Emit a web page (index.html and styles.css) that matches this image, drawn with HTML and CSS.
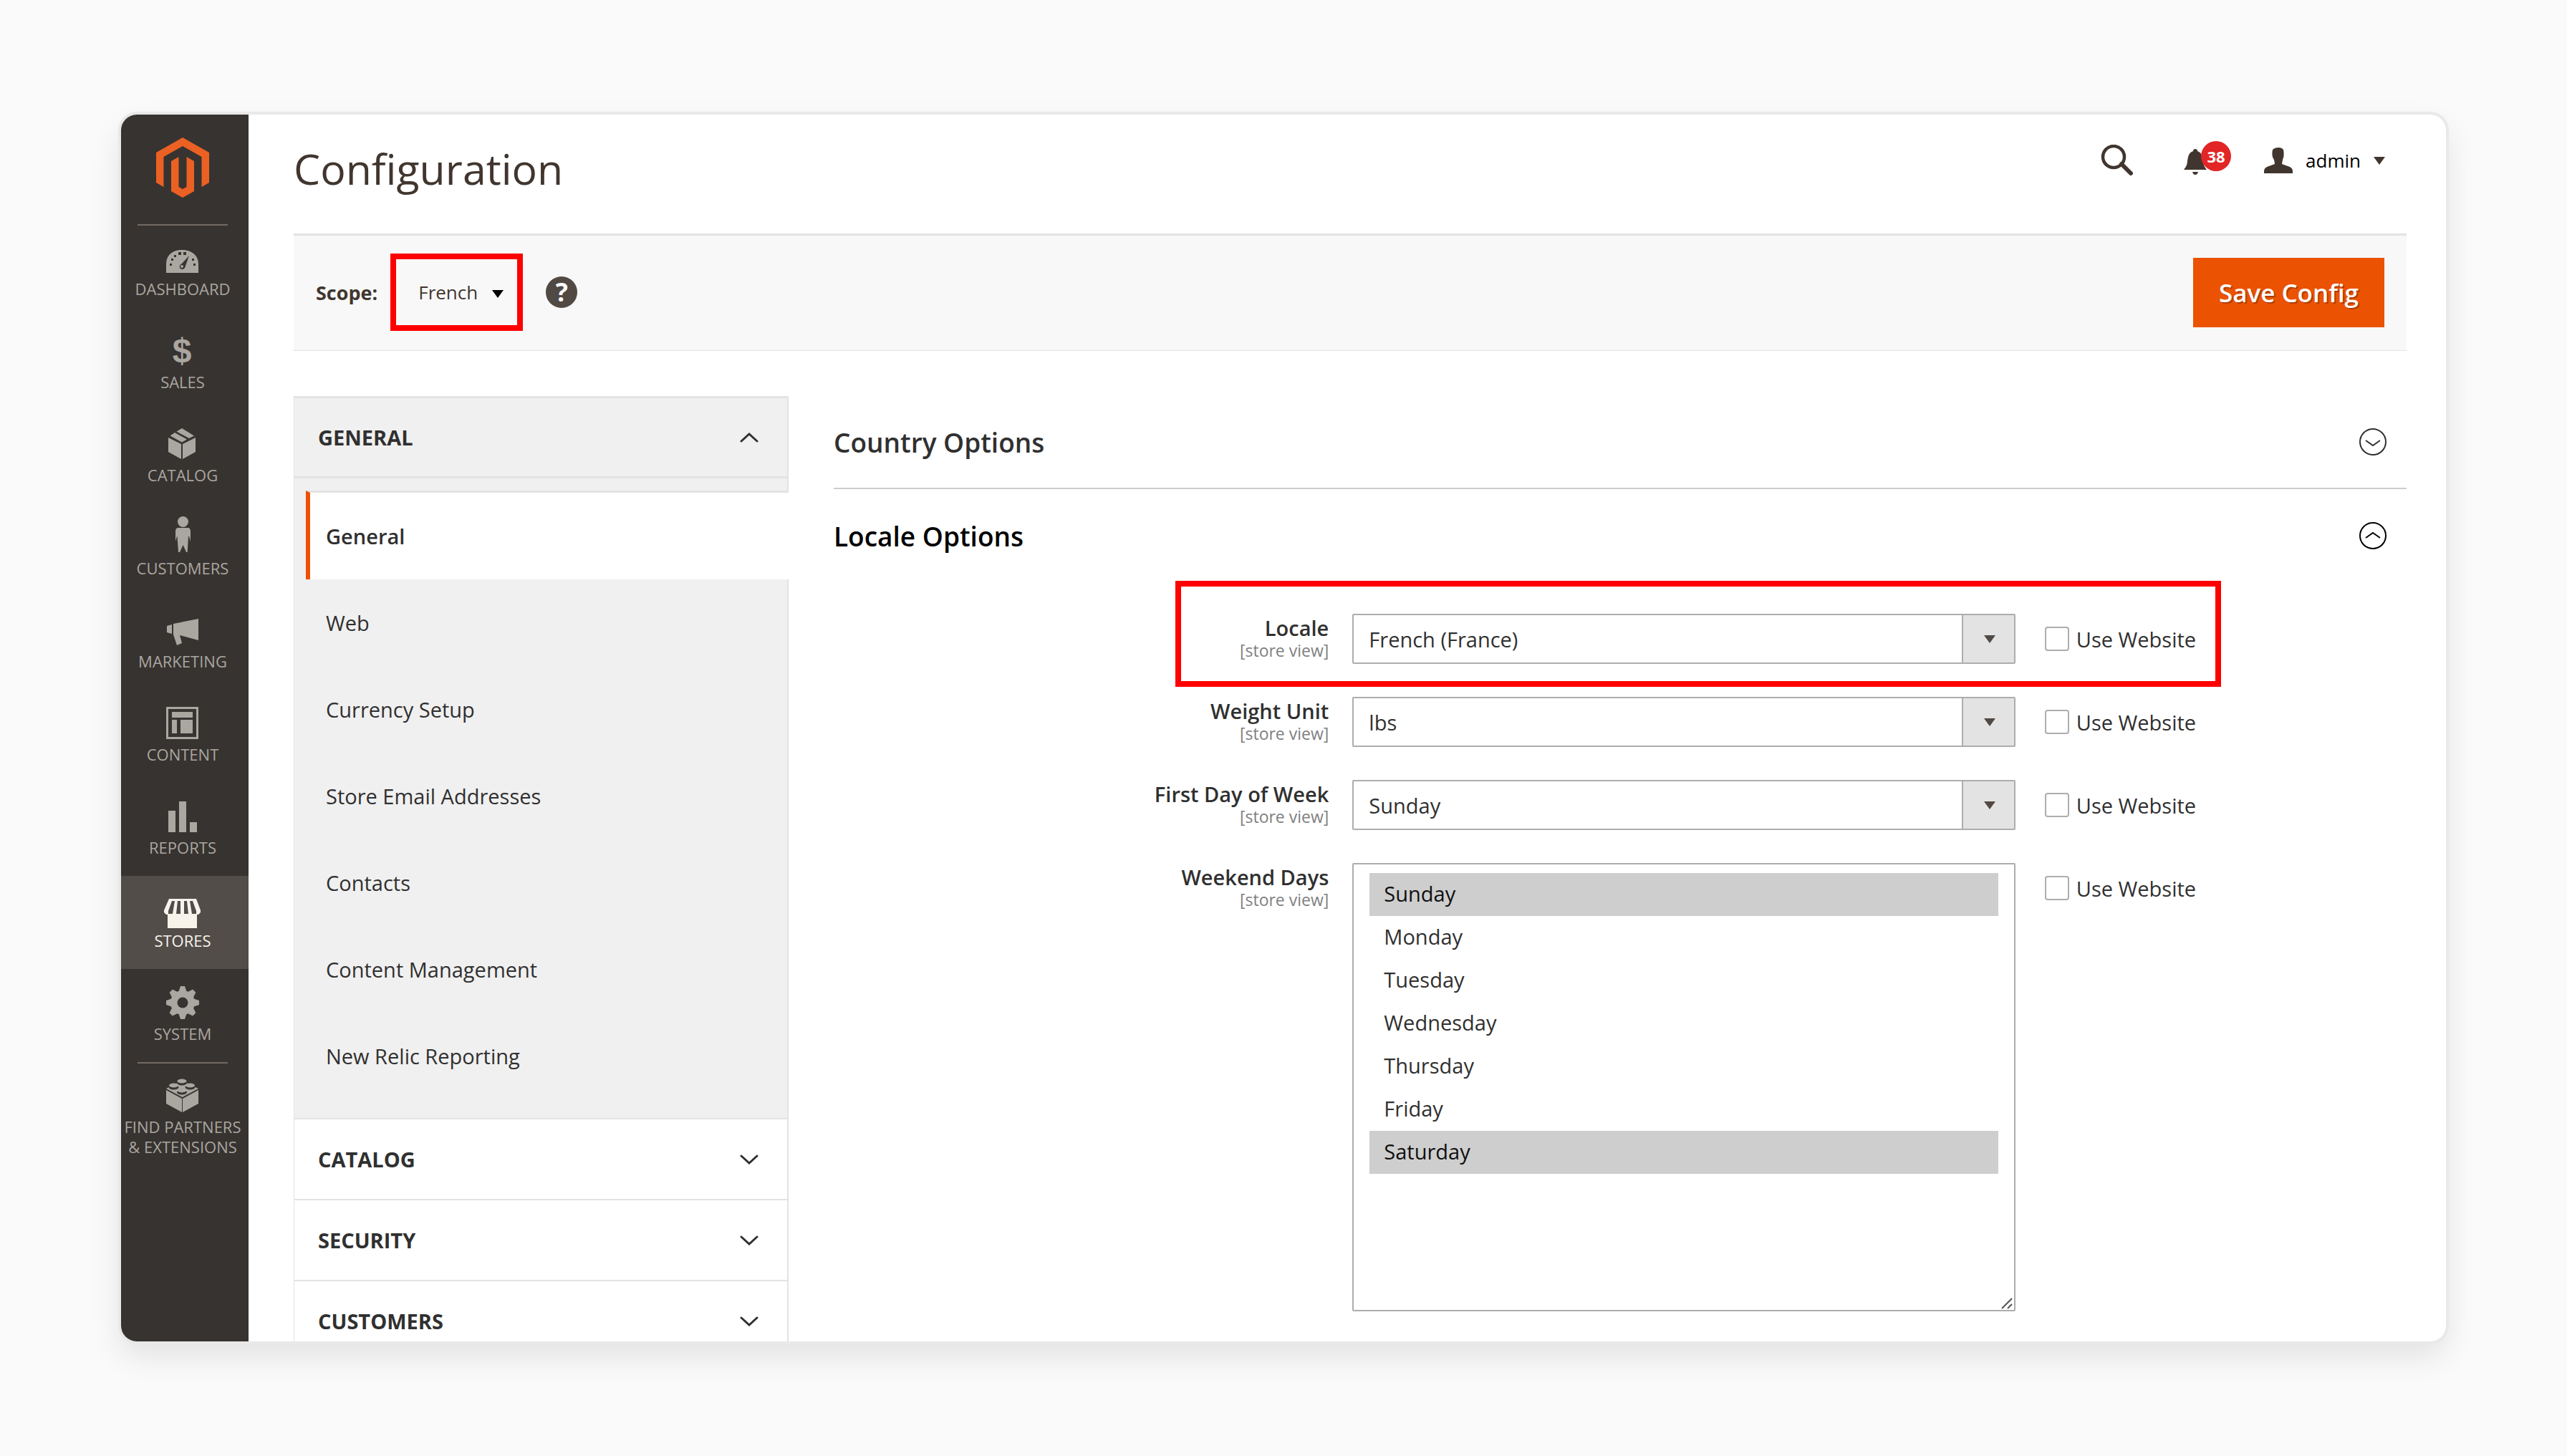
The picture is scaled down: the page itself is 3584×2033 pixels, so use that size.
FILE: index.html
```html
<!DOCTYPE html>
<html lang="en">
<head>
  <meta charset="UTF-8">
  <meta name="viewport" content="width=device-width, initial-scale=1.0">
  <title>Configuration</title>
  <link rel="stylesheet" href="styles.css">
</head>
<body>
  <div class="window">
    <nav class="sidebar" aria-label="Main menu">
      <a class="logo" href="#" aria-label="Home">
        <svg viewBox="0 0 74 84"><path d="M37 0 74 21V63L63.500 69V27L37 12 10.500 27V69L0 63V21Z"/><path d="M21 33 31.500 27V69L37 72 42.500 69V27L53 33V75L37 84 21 75Z"/></svg>
      </a>
      <ul class="menu">
        <li><a href="#">
          <svg viewBox="0 0 64 60"><path d="M9 52V40C9 27 18 20 31 20S54 27 54 40V52Z"/><path class="cut" d="M41 28 35 45a4 4 0 0 1-7 0c-1-3 1-5 3-6Z"/><path class="cut" d="M14 39h3v3h-3zM47 39h3v3h-3zM16 32h3v3h-3zM45 32h3v3h-3zM20 27h3v3h-3zM26 23h4v4h-4zM33 23h4v4h-4z"/><circle cx="31" cy="43" r="2"/></svg>
          <span>DASHBOARD</span></a></li>
        <li><a href="#">
          <svg viewBox="0 0 64 60"><text class="dollar" x="31" y="47" text-anchor="middle">$</text></svg>
          <span>SALES</span></a></li>
        <li><a href="#">
          <svg viewBox="0 0 64 60"><path d="M12 22 30 31V52L12 42ZM32 31 50 22V42L32 52ZM14.500 19.500 21 15 38 24.500 31 28.500ZM23.500 13.500 31 9 48 19.500 41 23Z"/></svg>
          <span>CATALOG</span></a></li>
        <li><a href="#">
          <svg viewBox="0 0 64 60"><circle cx="32.500" cy="9.500" r="7.500"/><path d="M26 18H39Q43 18 43 23V37L41 30H40L38.700 52H37L32.700 42 28 52H26L24.500 30H24L22 37V23Q22 18 26 18Z"/></svg>
          <span>CUSTOMERS</span></a></li>
        <li><a href="#">
          <svg viewBox="0 0 64 60"><path d="M19 22 54 15V45L28 38 31 49 24 52 19 37ZM10 25 17 23V36L10 34Z"/></svg>
          <span>MARKETING</span></a></li>
        <li><a href="#">
          <svg viewBox="0 0 64 60"><path fill-rule="evenodd" d="M9 8H54V53H9ZM12 11V50H51V11Z"/><path d="M17 15H46V23H17ZM17 26H24V45H17ZM29 26H46V45H29Z"/></svg>
          <span>CONTENT</span></a></li>
        <li><a href="#">
          <svg viewBox="0 0 64 60"><path d="M12 23H22V53H12ZM27 10H37V53H27ZM42 39H52V53H42Z"/></svg>
          <span>REPORTS</span></a></li>
        <li class="active"><a href="#">
          <svg viewBox="0 0 64 60"><path d="M13 16H51L57 32V35L54 38H52V57H11V38H9L6 35V32Z"/><path class="cut" d="M17 19H21L18 37H12V33ZM25 19H29V37H23ZM34 19H38L40 37H34ZM42 19H46L51 33V37H45Z"/></svg>
          <span>STORES</span></a></li>
        <li><a href="#">
          <svg viewBox="0 0 64 60"><g transform="translate(32 31)"><circle r="17"/><path id="tooth" d="M-6 -14-3 -23H3L6 -14V14L3 23H-3L-6 14Z"/><use href="#tooth" transform="rotate(45)"/><use href="#tooth" transform="rotate(90)"/><use href="#tooth" transform="rotate(135)"/><circle class="cut" r="7.500"/></g></svg>
          <span>SYSTEM</span></a></li>
        <li class="partners"><a href="#">
          <svg viewBox="0 0 64 60"><path d="M9 23 31 35V54L9 42ZM32 35 54 23V42L32 54ZM9 21 31 10 54 21 31.500 33Z"/><g class="cut"><ellipse cx="31" cy="13" rx="7" ry="3.500"/><ellipse cx="19.500" cy="19" rx="7" ry="3.500"/><ellipse cx="42.500" cy="19" rx="7" ry="3.500"/><ellipse cx="31" cy="26" rx="7" ry="3.500"/></g><ellipse cx="31" cy="10.500" rx="6.500" ry="3"/><ellipse cx="19.500" cy="16.500" rx="6.500" ry="3"/><ellipse cx="42.500" cy="16.500" rx="6.500" ry="3"/><ellipse cx="31" cy="23.500" rx="6.500" ry="3"/></svg>
          <span>FIND PARTNERS<br>&amp; EXTENSIONS</span></a></li>
      </ul>
    </nav>

    <main class="page">
      <header class="page-header">
        <h1>Configuration</h1>
        <div class="user-tools">
          <button class="icon-btn" type="button" aria-label="Search">
            <svg width="46" height="44" viewBox="0 0 46 44"><circle cx="18" cy="17" r="15" fill="none" stroke="currentColor" stroke-width="4.500"/><path d="M29 27 42 40" stroke="currentColor" stroke-width="6" stroke-linecap="round"/></svg>
          </button>
          <button class="icon-btn bell" type="button" aria-label="Notifications">
            <svg width="32" height="36" viewBox="0 0 32 36"><path d="M16 0Q19 0 19 3C25 5 26 10 27 17 27.500 23 29 25 32 29H0C3 25 4.500 23 5 17 6 10 7 5 13 3Q13 0 16 0ZM12 32H20Q19 36 16 36T12 32Z"/></svg>
            <span class="badge">38</span>
          </button>
          <button class="account" type="button">
            <svg width="40" height="36" viewBox="0 0 40 36"><path d="M12 3Q15 0 20 0T27 3C28 8 28 13 26 17L25 23 36 27Q40 29 40 33V36H0V33Q0 29 4 27L15 23 14 17C11 13 11 8 12 3Z"/></svg>
            admin
            <i class="caret"></i>
          </button>
        </div>
      </header>

      <div class="scope-bar">
        <label for="scope">Scope:</label>
        <div class="scope-select">
          <select id="scope"><option>French</option></select>
        </div>
        <button class="help" type="button" aria-label="Help">?</button>
        <button class="save" type="button">Save Config</button>
      </div>

      <div class="columns">
        <nav class="config-nav" aria-label="Configuration sections">
          <button class="group open" type="button">GENERAL
            <svg viewBox="0 0 26 14"><path d="M2 12 13 2 24 12"/></svg></button>
          <ul class="items">
            <li><a class="current" href="#">General</a></li>
            <li><a href="#">Web</a></li>
            <li><a href="#">Currency Setup</a></li>
            <li><a href="#">Store Email Addresses</a></li>
            <li><a href="#">Contacts</a></li>
            <li><a href="#">Content Management</a></li>
            <li><a href="#">New Relic Reporting</a></li>
          </ul>
          <button class="group" type="button">CATALOG
            <svg viewBox="0 0 26 14"><path d="M2 2 13 12 24 2"/></svg></button>
          <button class="group" type="button">SECURITY
            <svg viewBox="0 0 26 14"><path d="M2 2 13 12 24 2"/></svg></button>
          <button class="group" type="button">CUSTOMERS
            <svg viewBox="0 0 26 14"><path d="M2 2 13 12 24 2"/></svg></button>
        </nav>

        <form class="settings">
          <button class="section" type="button">Country Options
            <svg viewBox="0 0 38 38"><circle cx="19" cy="19" r="18"/><path d="M9 17 19 24 29 17"/></svg></button>
          <button class="section open" type="button">Locale Options
            <svg viewBox="0 0 38 38"><circle cx="19" cy="19" r="18"/><path d="M9 22 19 15 29 22"/></svg></button>

          <div class="fields">
            <div class="field highlighted">
              <label class="name" for="locale">Locale <small>[store view]</small></label>
              <div class="select"><select id="locale"><option>French (France)</option></select></div>
              <label class="inherit"><input type="checkbox">Use Website</label>
            </div>
            <div class="field">
              <label class="name" for="weight">Weight Unit <small>[store view]</small></label>
              <div class="select"><select id="weight"><option>lbs</option></select></div>
              <label class="inherit"><input type="checkbox">Use Website</label>
            </div>
            <div class="field">
              <label class="name" for="firstday">First Day of Week <small>[store view]</small></label>
              <div class="select"><select id="firstday"><option>Sunday</option></select></div>
              <label class="inherit"><input type="checkbox">Use Website</label>
            </div>
            <div class="field">
              <label class="name" for="weekend">Weekend Days <small>[store view]</small></label>
              <div class="multiselect">
                <select id="weekend" multiple size="10">
                  <option selected>Sunday</option>
                  <option>Monday</option>
                  <option>Tuesday</option>
                  <option>Wednesday</option>
                  <option>Thursday</option>
                  <option>Friday</option>
                  <option selected>Saturday</option>
                </select>
                <svg class="grip" viewBox="0 0 16 16"><path d="M1 15 15 1M9 15 15 9"/></svg>
              </div>
              <label class="inherit"><input type="checkbox">Use Website</label>
            </div>
          </div>
        </form>
      </div>
    </main>
  </div>
</body>
</html>
```

FILE: styles.css
```css
* {
  box-sizing: border-box;
}
body {
  margin: 0;
  height: 100vh;
  padding: 160px 169px;
  display: flex;
  background: #fafafa;
  color: #303030;
  font-family: "Open Sans", "Noto Sans", sans-serif;
  font-size: 29px;
}
button, select, input {
  font: inherit;
  color: inherit;
  margin: 0;
}
button {
  border: 0;
  padding: 0;
  background: none;
  text-align: left;
}
a {
  color: inherit;
  text-decoration: none;
}
ul {
  list-style: none;
  margin: 0;
  padding: 0;
}
.window {
  flex: 1;
  display: flex;
  overflow: hidden;
  border-radius: 22px;
  background: #fff;
  box-shadow: 0 0 0 4px #e9e9e9, 0 20px 44px rgba(0, 0, 0, 0.1);
}

/* dark menu on the left */
.sidebar {
  width: 178px;
  flex: none;
  padding-right: 6px;
  background: #373330;
  color: #aaa6a0;
  text-align: center;
}
.logo {
  display: block;
  height: 153px;
  padding-top: 32px;
}
.logo svg {
  width: 74px;
  height: 84px;
  fill: #eb6123;
}
.menu::before, .partners::before {
  content: "";
  display: block;
  width: 126px;
  height: 2px;
  margin: 0 auto -2px;
  background: #736963;
}
.menu li {
  margin-right: -6px;
}
.menu a {
  display: block;
  height: 130px;
  padding: 16px 6px 0 0;
  font-size: 22px;
  line-height: 28px;
}
.menu svg {
  display: block;
  width: 64px;
  height: 60px;
  margin: 0 auto;
  fill: #aaa6a0;
}
.menu .cut {
  fill: #373330;
}
.menu span {
  display: block;
  white-space: nowrap;
}
.dollar {
  font: bold 48px "Liberation Sans", sans-serif;
}
.menu .active {
  background: #524d49;
  color: #f7f3eb;
}
.active svg {
  fill: #f7f3eb;
}
.active .cut {
  fill: #524d49;
}
.partners::before {
  position: relative;
  right: 3px;
}

/* page header */
.page {
  flex: 1;
  min-width: 0;
  padding: 34px 55px 0 63px;
}
.page-header {
  display: flex;
  justify-content: space-between;
  height: 132px;
  color: #41362f;
}
h1 {
  margin: 0;
  font-size: 59px;
  font-weight: 400;
  line-height: 82px;
}
.user-tools {
  display: flex;
  align-items: center;
  height: 60px;
  padding-right: 30px;
  gap: 48px;
}
.user-tools svg {
  display: block;
  fill: currentColor;
}
.icon-btn {
  position: relative;
}
.bell {
  width: 64px;
  margin-left: 22px;
}
.bell svg {
  margin-top: 4px;
}
.badge {
  position: absolute;
  top: -7px;
  left: 24px;
  width: 42px;
  height: 42px;
  border-radius: 50%;
  background: #e22626;
  color: #fff;
  font-size: 22px;
  font-weight: 700;
  line-height: 42px;
  text-align: center;
}
.account {
  display: flex;
  align-items: center;
  gap: 18px;
  font-size: 26px;
  color: #000;
}
.account svg {
  color: #41362f;
}
.caret {
  border: solid transparent;
  border-width: 11px 8px 0;
  border-top-color: #41362f;
}

/* scope and save */
.scope-bar {
  display: flex;
  align-items: center;
  height: 164px;
  padding: 0 31px 2px;
  border-top: 3px solid #e3e3e3;
  border-bottom: 1px solid #e3e3e3;
  background: #f8f8f8;
  color: #41362f;
  font-size: 26px;
}
.scope-bar label {
  font-size: 27px;
  font-weight: 700;
}
.scope-select {
  position: relative;
  margin: 0 32px 0 18px;
  border: 8px solid #f00;
}
.scope-select select {
  appearance: none;
  display: block;
  width: 169px;
  height: 92px;
  padding: 0 0 0 31px;
  border: 0;
  background: none;
}
.scope-select::after {
  content: "";
  position: absolute;
  right: 19px;
  top: 43px;
  border: solid transparent;
  border-width: 11px 8px 0;
  border-top-color: #000;
}
.help {
  width: 44px;
  height: 44px;
  border-radius: 50%;
  background: #514943;
  color: #fff;
  font-size: 36px;
  font-weight: 700;
  line-height: 44px;
  text-align: center;
}
.save {
  height: 97px;
  margin-left: auto;
  padding: 0 36px;
  background: #eb5202;
  color: #fff;
  font-size: 35px;
  font-weight: 600;
  text-shadow: 2px 2px 0 rgba(0, 0, 0, 0.25);
}

/* section navigation */
.columns {
  display: flex;
  gap: 63px;
  align-items: flex-start;
  margin-top: 63px;
}
.config-nav {
  width: 691px;
  flex: none;
  border: 2px solid #e3e3e3;
  border-width: 3px 2px 2px 1px;
}
.group {
  display: flex;
  align-items: center;
  justify-content: space-between;
  width: 100%;
  height: 113px;
  padding: 0 40px 0 33px;
  border-bottom: 2px solid #e3e3e3;
  font-weight: 700;
}
.group.open {
  height: 112px;
  border-bottom-width: 3px;
  background: #f0f0f0;
}
.group svg {
  width: 26px;
  height: 14px;
  fill: none;
  stroke: #303030;
  stroke-width: 3;
  stroke-linecap: round;
}
.items {
  padding: 17px 0 26px 16px;
  border-bottom: 2px solid #e3e3e3;
  background: #f0f0f0;
}
.items a {
  display: block;
  padding-left: 28px;
  line-height: 121px;
}
.items .current {
  margin-right: -2px;
  padding-left: 22px;
  border-top: 3px solid #e3e3e3;
  border-left: 6px solid #eb5202;
  background: #fff;
  font-weight: 600;
}

/* settings form */
.settings {
  flex: 1;
}
.section {
  display: flex;
  align-items: center;
  justify-content: space-between;
  width: 100%;
  height: 130px;
  padding-right: 28px;
  border-bottom: 2px solid #ccc;
  font-size: 37px;
  font-weight: 600;
}
.section.open {
  border-bottom: 0;
  color: #000;
}
.section svg {
  width: 38px;
  height: 38px;
  fill: none;
  stroke: currentColor;
  stroke-width: 2;
}
.fields {
  display: flex;
  flex-direction: column;
  gap: 46px;
  margin-top: 44px;
}
.field {
  position: relative;
  display: grid;
  grid-template-columns: 724fr 925fr 546fr;
  align-items: start;
}
.highlighted::after {
  content: "";
  position: absolute;
  top: -46px;
  right: 11.8%;
  bottom: -32px;
  left: 21.7%;
  border: 8px solid #f00;
  pointer-events: none;
}
.name {
  padding-right: 33px;
  font-weight: 600;
  line-height: 40px;
  text-align: right;
}
.name small {
  display: block;
  color: #808080;
  font-size: 23px;
  font-weight: 400;
  line-height: 22px;
}
.select {
  position: relative;
}
.select select {
  appearance: none;
  display: block;
  width: 100%;
  height: 70px;
  padding: 0 96px 0 21px;
  border: 2px solid #adadad;
  border-radius: 2px;
  background: linear-gradient(#adadad, #adadad) right 71px top / 2px 100% no-repeat,
    linear-gradient(#e3e3e3, #e3e3e3) right / 71px 100% no-repeat #fff;
}
.select::after {
  content: "";
  position: absolute;
  right: 28px;
  top: 30px;
  border: solid transparent;
  border-width: 11px 8px 0;
  border-top-color: #514943;
}
.inherit {
  display: flex;
  align-items: center;
  gap: 10px;
  height: 70px;
  padding-left: 41px;
}
.inherit input {
  appearance: none;
  width: 34px;
  height: 34px;
  border: 2px solid #adadad;
  border-radius: 4px;
  background: #fff;
}
.multiselect {
  position: relative;
}
.multiselect select {
  display: block;
  width: 100%;
  height: 626px;
  padding: 12px 22px;
  overflow: hidden;
  border: 2px solid #adadad;
  border-radius: 2px;
  background: #fff;
}
.multiselect option {
  height: 60px;
  padding: 9px 20px;
}
.multiselect option:checked {
  background: #cecece;
  color: #101010;
}
.grip {
  position: absolute;
  right: 4px;
  bottom: 3px;
  width: 16px;
  height: 16px;
  stroke: #555;
  stroke-width: 2;
}
```
